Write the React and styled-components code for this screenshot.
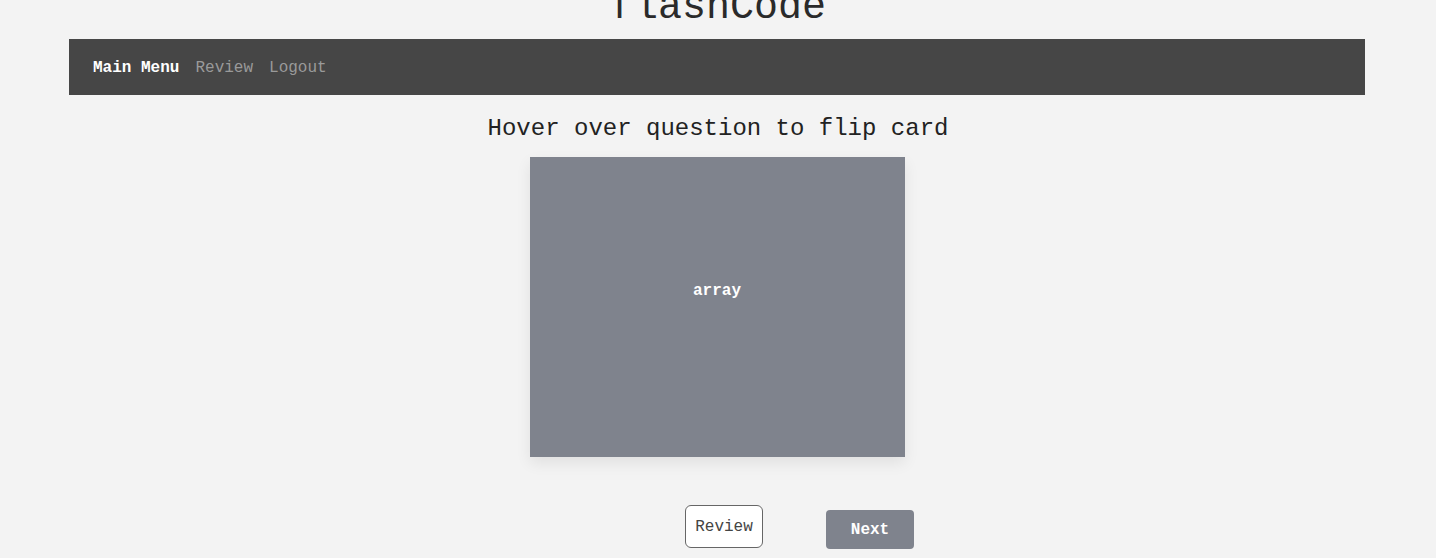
import React from 'react'
import styled, { createGlobalStyle } from 'styled-components'

const mono = `"Liberation Mono", "Courier New", monospace`
const slate = '#7f838d'

const Global = createGlobalStyle`
  html, body {
    margin: 0;
    background: #f3f3f3;
    font-family: ${mono};
    overflow: hidden;
  }
`

const Page = styled.div`
  width: 1436px;
  height: 558px;
  display: flex;
  flex-direction: column;
  align-items: center;
`

const Title = styled.h1`
  margin: -12px 0 0;
  height: 40px;
  line-height: 40px;
  font-size: 40px;
  font-weight: normal;
  color: #2a2a2a;
  text-align: center;
`

const Nav = styled.nav`
  margin-top: 11px;
  align-self: stretch;
  margin-left: 69px;
  margin-right: 71px;
  height: 56px;
  background: #464646;
  display: flex;
  align-items: center;
  gap: 16px;
  padding: 2px 0 0 24px;
  box-sizing: border-box;
`

const NavLink = styled.span`
  font-size: 16px;
  font-weight: ${p => (p.$active ? 'bold' : 'normal')};
  color: ${p => (p.$active ? '#ffffff' : '#9a9a9a')};
`

const Heading = styled.h2`
  margin: 20px 0 0;
  font-size: 24px;
  line-height: 28px;
  font-weight: normal;
  color: #222;
`

const Card = styled.div`
  margin-top: 14px;
  width: 375px;
  height: 300px;
  box-sizing: border-box;
  padding-bottom: 32px;
  background: ${slate};
  display: flex;
  align-items: center;
  justify-content: center;
  box-shadow: 0 6px 14px rgba(0, 0, 0, 0.08);
  color: #fff;
  font-size: 16px;
  font-weight: bold;
  margin-left: -2px;
`

const Actions = styled.div`
  margin-top: 48px;
  display: flex;
  align-items: flex-end;
  gap: 63px;
  padding-left: 163px;
`

const Button = styled.button`
  font-family: ${mono};
  font-size: 16px;
  box-sizing: border-box;
  cursor: pointer;
  border-radius: ${p => (p.$primary ? '4px' : '6px')};
  border: ${p => (p.$primary ? 'none' : '1px solid #666')};
  background: ${p => (p.$primary ? slate : '#fff')};
  color: ${p => (p.$primary ? '#fff' : '#444')};
  font-weight: ${p => (p.$primary ? 'bold' : 'normal')};
  width: ${p => (p.$primary ? '88px' : '78px')};
  height: ${p => (p.$primary ? '39px' : '43px')};
  margin-bottom: ${p => (p.$primary ? '0' : '1px')};
  padding: 0;
`

export default function App() {
  return (
    <Page>
      <Global />
      <Title>flashCode</Title>
      <Nav>
        <NavLink $active>Main Menu</NavLink>
        <NavLink>Review</NavLink>
        <NavLink>Logout</NavLink>
      </Nav>
      <Heading>Hover over question to flip card</Heading>
      <Card>array</Card>
      <Actions>
        <Button>Review</Button>
        <Button $primary>Next</Button>
      </Actions>
    </Page>
  )
}
